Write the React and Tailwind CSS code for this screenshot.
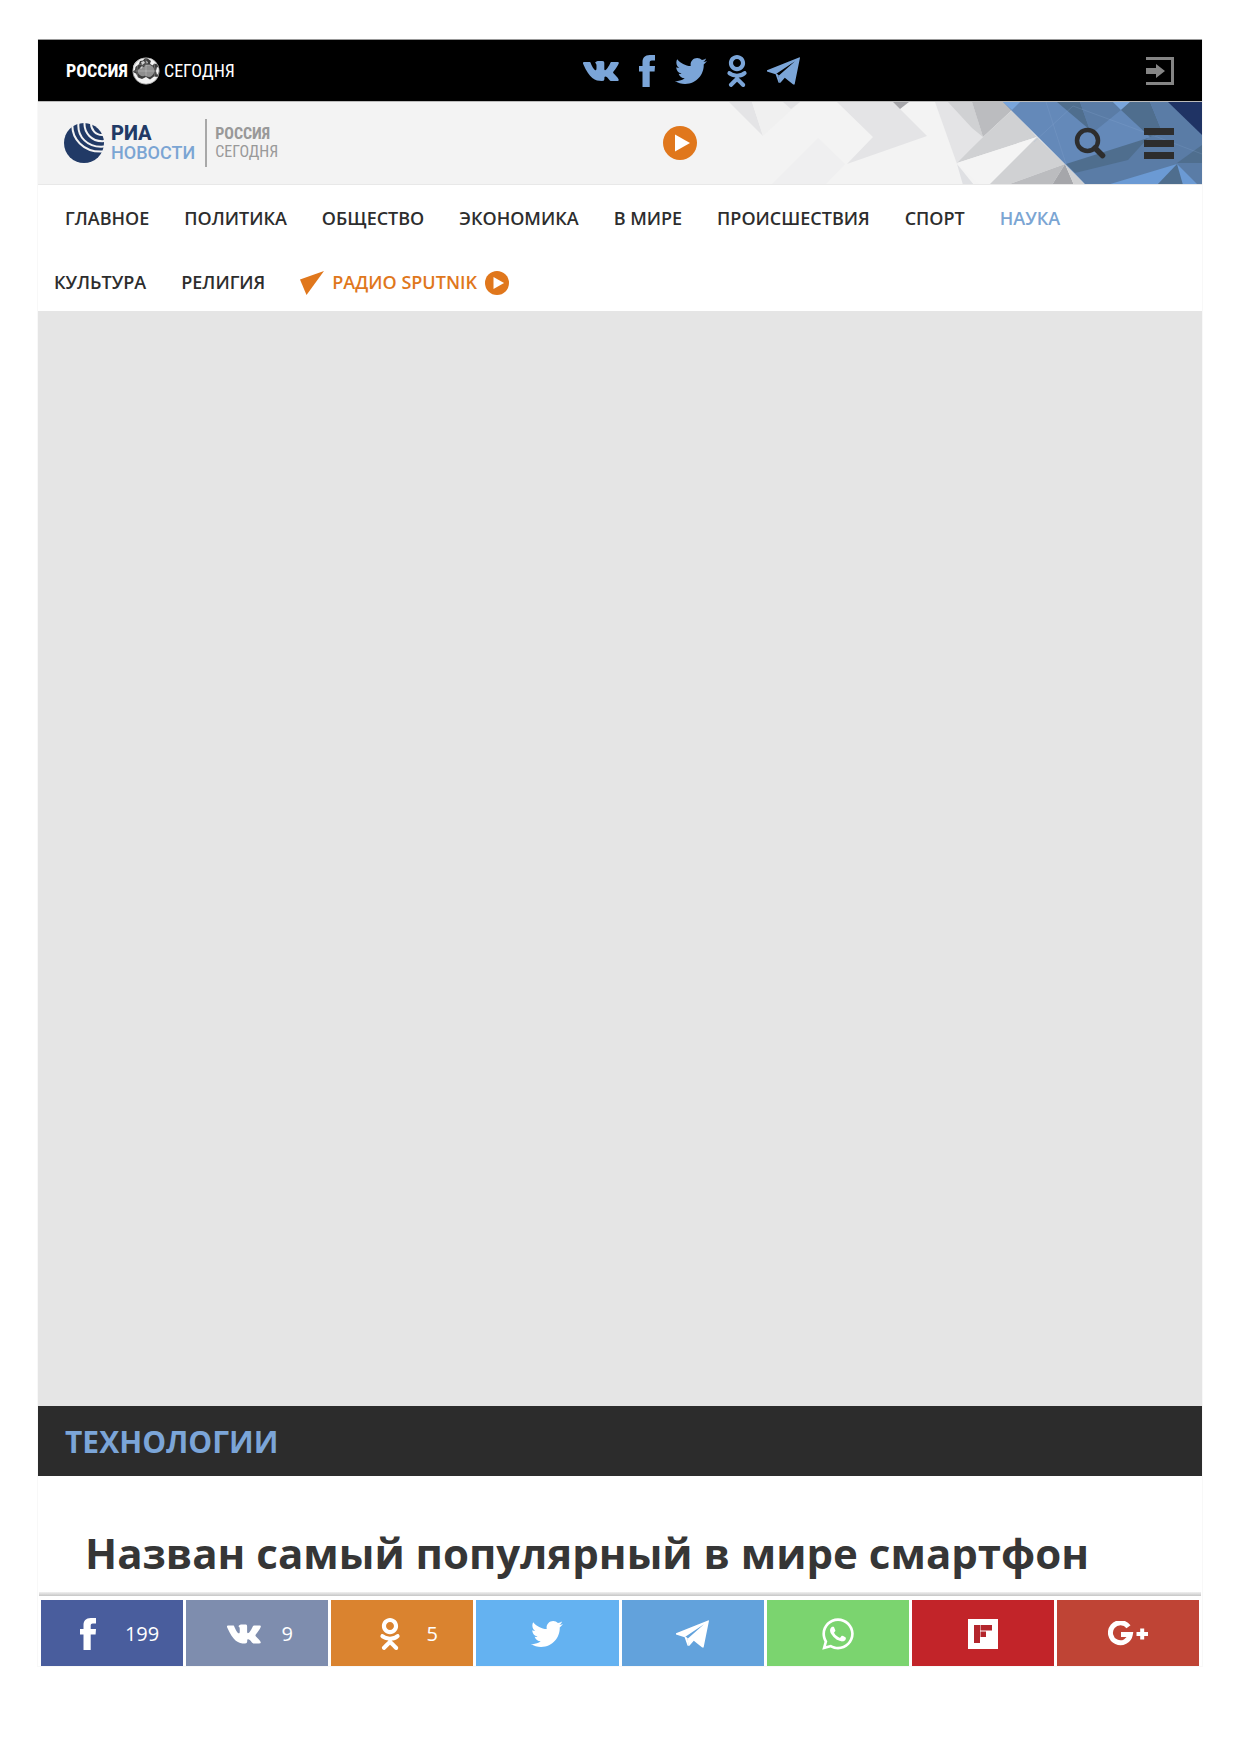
import React from "react";
import { FaTwitter, FaOdnoklassniki, FaWhatsapp } from "react-icons/fa";

function FacebookIcon({ className }) {
  return (
    <svg viewBox="0 0 16 32" className={className} fill="currentColor" aria-hidden="true">
      <path d="M16 0v5.400h-3.200c-1.500 0-2.100.8-2.100 2.200V11H16l-.4 5.400h-4.900V32H3.500V16.400H0V11h3.500V7.400C3.500 2.800 5.800 0 10.800 0z" />
    </svg>
  );
}

function VkIcon({ className }) {
  return (
    <svg viewBox="0 0 36 20" className={className} fill="currentColor" aria-hidden="true">
      <path d="M1 1h5.500c.8 0 1 .4 1.300 1.200C9.300 6 11.500 9.300 12.600 9.300c.8 0 .9-1 .9-2.500V4.400c0-1.600-.7-2.200-1.400-2.700C12.700.600 14 0 16 0h3.200c1.700 0 2.100.7 2.100 2v6c0 .8.300 1.200.8 1.200 1.300 0 3.900-4.200 5.200-7.200.3-.7.7-1 1.500-1H34.500c1.200 0 1.500.7 1.200 1.600-.8 2.200-3 5.200-5.200 8-.6.8-.5 1.200.2 2 2 2 4 4 4.800 5.600.6 1.200 0 1.800-1.300 1.800h-5.600c-1.200 0-1.700-.6-2.600-1.600-1.400-1.600-2.500-2.800-3.600-2.800-.9 0-1 .7-1 1.900 0 1.700-.3 2.500-2.400 2.500C12 20 6.500 17.500.2 3 -.3 1.800-.1 1 1 1z" />
    </svg>
  );
}

function TelegramIcon({ className }) {
  return (
    <svg viewBox="0 0 33 28" className={className} fill="currentColor" aria-hidden="true">
      <path d="M32.600.300 0 13.200v1.200l8.600 2.800L28 4.200 11.600 18.800l.9 6.900.9.100 4.400-5 8.400 6.800h1.400L33 .700z" />
      <path d="M8.600 17.200 11.600 25.800 12.800 25.800 11.600 18.800 12 18.400 9.600 16.600z" />
    </svg>
  );
}

function FlipboardIcon({ className }) {
  return (
    <svg viewBox="0 0 30 30" className={className} aria-hidden="true">
      <path fill="#fff" d="M0 0h30v30H0z" />
      <path fill="#b3262c" d="M6 6h6v18H6zM12.500 6H24v5.500H12.500zM12.500 12.500H18V18h-5.500z" />
    </svg>
  );
}

function GooglePlusIcon({ className }) {
  return (
    <svg viewBox="0 0 40 26" className={className} aria-hidden="true">
      <path d="M20.500 5.800A10 10 0 1 0 22.300 13.500H13" fill="none" stroke="#fff" strokeWidth="5" />
      <path d="M28.500 13H40M34.200 7.500v11" stroke="#fff" strokeWidth="4" />
    </svg>
  );
}

function PlayIcon({ className }) {
  return (
    <svg viewBox="0 0 34 34" className={className} aria-hidden="true">
      <circle cx="17" cy="17" r="17" fill="#e0771c" />
      <path d="M12 8.500v17L27 17z" fill="#fff" />
    </svg>
  );
}

function EarthIcon({ className }) {
  return (
    <svg viewBox="0 0 28 28" className={className} aria-hidden="true">
      <circle cx="14" cy="14" r="13.500" fill="#3c3c3c" />
      <path fill="#8f8f8f" d="M6 13c2-3 5-2 7-4s5-1 7 0 3 5 2 7-3 4-5 4-3-2-5-1-5-1-6-3z" />
      <path fill="#f2f2f2" d="M1 10C2 5 7 1 13 1l-2 2.500-3 .5-1 3-3.500 3L3 13l-2 1zM15 1c4 0 8 2 10 6l-3-.500-1.500 2-2.500-2 1-2.500zM1 15l3 1.500 2 4 4 1.500 4-2 4 2.500 4-3 4 .5c-2 4-6 7-12 7C7 27 2 22 1 15zM25 10l2 1c0 3 0 5-2 7l-1-4z" />
      <path fill="#d0d0d0" d="M9 5l3-1 1 2-3 2zM14 4l2 1-1 2zM8 11l2-2 1 1-2 2z" />
      <path fill="none" stroke="#fff" strokeOpacity="0.350" strokeWidth="0.700" d="M14 1v26M1 14h26M4 6c6 3 14 3 20 0M8 2c-4 8-4 16 0 24M20 2c4 8 4 16 0 24" />
      <circle cx="14" cy="14" r="13.200" fill="none" stroke="#aaa" strokeWidth="0.700" />
    </svg>
  );
}

function RiaGlobe({ className }) {
  return (
    <svg viewBox="0 0 40 40" className={className} aria-hidden="true">
      <circle cx="20" cy="20" r="20" fill="#213a66" />
      <g fill="none" stroke="#f3f3f3">
        <path d="M8.500 0C7 15 19 30 40 28.500" strokeWidth="2" />
        <path d="M14.500 0C13 13 23 25.500 41 23.500" strokeWidth="2" />
        <path d="M20.500 0C20 9 27 19.500 41 18" strokeWidth="2" />
        <path d="M27 0C27 6 31 13 40 12" strokeWidth="2" />
      </g>
    </svg>
  );
}

function HeaderPattern() {
  return (
    <svg
      viewBox="0 0 480 83"
      preserveAspectRatio="xMaxYMin slice"
      className="absolute inset-y-0 right-0 h-full w-[480px]"
      aria-hidden="true"
    >
      <path fill="#e4e4e6" d="M7 0H30L41 34z" />
      <path fill="#f0f0f0" d="M30 0H78L41 34z" />
      <path fill="#e2e2e4" d="M61 0H78L69 7z" />
      <path fill="#e4e4e6" d="M115 0H171L205 34 125 62 151 35z" />
      <path fill="#a6a6aa" d="M171 0H187L178 7z" />
      <path fill="#efeff0" d="M96 36 123 62 103 83H49z" />
      <path fill="#e4e4e6" d="M213 0H250L261 35 235 62z" />
      <path fill="#d0d1d3" d="M226 0H250L261 35 250 26z" />
      <path fill="#c8c9cb" d="M248 48 235 62 261 35z" fillOpacity="0.500" />
      <path fill="#dfe0e3" d="M235 62 252 83H241z" />
      <path fill="#bbbcbf" d="M250 0H281L290 8 261 35z" />
      <path fill="#d0d1d3" d="M290 8 315 35 235 61 261 35z" />
      <path fill="#f4f4f4" d="M315 35 235 61 258 83H267z" />
      <path fill="#d0d1d3" d="M315 35 343 62 285 83H267z" />
      <path fill="#bbbcbf" d="M343 62 285 83H330z" />
      <path fill="#a5a6aa" d="M343 62 330 83H352z" />
      <path fill="#d0d1d3" d="M343 62 352 83H364z" />
      <path fill="#6489b9" d="M281 0H480V83H364z" />
      <path fill="#78a5dc" d="M281 0H298L290 8z" />
      <path fill="#4f6e8e" d="M335 0H358L368 28z" />
      <path fill="#5a7ca6" d="M358 0H391L399 8 373 29H368z" />
      <path fill="#78a5dc" d="M391 0H408L399 8z" />
      <path fill="#4f6e8e" d="M408 0H428L441 32 428 35 399 8z" />
      <path fill="#5a7ca6" d="M428 0H448L480 33V83H364L353 71 428 35 441 32z" />
      <path fill="#1f3364" d="M446 0H480V33z" />
      <path fill="#4f6e8e" d="M426 36 344 62 353 71 406 58z" />
      <path fill="#4f6e8e" d="M455 61 480 43V61z" />
      <path fill="#6b9ad4" d="M455 62 385 83H476z" />
      <path fill="#4f6e8e" d="M455 62 435 83H461z" />
      <path fill="none" stroke="#8fb0d8" strokeOpacity="0.200" d="M324 0 344 62M312 40 351 4 430 33 480 52" />
    </svg>
  );
}

const narrow = "font-['Liberation_Sans_Narrow','Roboto_Condensed','Roboto',sans-serif]";

const navItems = [
  "Главное",
  "Политика",
  "Общество",
  "Экономика",
  "В мире",
  "Происшествия",
  "Спорт",
  "Наука",
  "Культура",
  "Религия",
];

const shares = [
  { label: "Facebook", color: "bg-[#495d9d]", count: "199", icon: <FacebookIcon className="h-8 w-4" /> },
  { label: "ВКонтакте", color: "bg-[#7e8dae]", count: "9", icon: <VkIcon className="h-5 w-9" /> },
  { label: "Одноклассники", color: "bg-[#da832f]", count: "5", icon: <FaOdnoklassniki className="size-8" /> },
  { label: "Twitter", color: "bg-[#64b2f1]", icon: <FaTwitter className="size-8" /> },
  { label: "Telegram", color: "bg-[#62a2dc]", icon: <TelegramIcon className="h-7 w-[33px]" /> },
  { label: "WhatsApp", color: "bg-[#7bd46f]", icon: <FaWhatsapp className="size-9" /> },
  { label: "Flipboard", color: "bg-[#c22429]", icon: <FlipboardIcon className="size-[30px]" /> },
  { label: "Google+", color: "bg-[#bf4435]", icon: <GooglePlusIcon className="h-[26px] w-10 shrink-0" /> },
];

export default function App() {
  return (
    <div className="bg-white pt-[39px] pr-9 pb-20 pl-[37px] font-['Open_Sans','Noto_Sans',sans-serif] text-[#2d2d2d]">
      <div className="border-x border-[#f8f8f8]">
        <div className="grid h-[63px] grid-cols-[1fr_auto_1fr] items-center border-y border-t-[#999] border-b-[#bbb] bg-black px-7">
          <a href="#" className={`flex items-center gap-1 text-white ${narrow} text-[18px] leading-none`}>
            <span className="font-bold">РОССИЯ</span>
            <EarthIcon className="size-7" />
            <span>СЕГОДНЯ</span>
          </a>
          <div className="ml-[142px] flex items-center gap-5 text-[#7ba5d8]">
            <a href="#" aria-label="ВКонтакте"><VkIcon className="h-5 w-9" /></a>
            <a href="#" aria-label="Facebook"><FacebookIcon className="h-8 w-4" /></a>
            <a href="#" aria-label="Twitter"><FaTwitter className="size-8" /></a>
            <a href="#" aria-label="Одноклассники" className="-mx-1.5"><FaOdnoklassniki className="size-8" /></a>
            <a href="#" aria-label="Telegram"><TelegramIcon className="h-7 w-[33px]" /></a>
          </div>
          <button type="button" aria-label="Войти" className="justify-self-end">
            <svg viewBox="0 0 28 28" className="size-7" aria-hidden="true">
              <path d="M0 1.500H26.500V26.500H0" fill="none" stroke="#858585" strokeWidth="3" />
              <path d="M0 11h10V7l9 7-9 7v-4H0z" fill="#858585" />
            </svg>
          </button>
        </div>

        <header className="relative grid h-[83px] grid-cols-[1fr_auto_1fr] items-center border-b border-[#e8e8e8] bg-[#f3f3f3] px-[26px]">
          <HeaderPattern />
          <div className="flex items-center">
            <a href="#" className="flex items-center gap-[7px]">
              <RiaGlobe className="size-10" />
              <span className="font-['Roboto',sans-serif] leading-5">
                <span className="block text-[20px] leading-5 font-extrabold text-[#213a66]">РИА</span>
                <span className="block text-[18px] leading-5 font-medium text-[#7ba5d3]">НОВОСТИ</span>
              </span>
            </a>
            <a href="#" className={`ml-2.5 flex h-12 flex-col justify-center border-l-2 border-[#a8a8a8] pl-2 ${narrow} text-[16px] leading-[18px] text-[#999]`}>
              <span className="font-bold">РОССИЯ</span>
              <span>СЕГОДНЯ</span>
            </a>
          </div>
          <button type="button" aria-label="Слушать радио" className="relative ml-[120px]">
            <PlayIcon className="size-[34px]" />
          </button>
          <div className="relative flex items-center gap-[38px] justify-self-end pr-0.5">
            <button type="button" aria-label="Поиск">
              <svg viewBox="0 0 32 32" className="size-8" fill="none" stroke="#2d2d2d" aria-hidden="true">
                <circle cx="13.500" cy="13.500" r="10.500" strokeWidth="4.500" />
                <path d="M21 21l7.500 7.500" strokeWidth="5.500" strokeLinecap="round" />
              </svg>
            </button>
            <button type="button" aria-label="Меню" className="flex w-[30px] flex-col gap-[5px]">
              <span className="h-[7px] bg-[#2d2d2d]" />
              <span className="h-[7px] bg-[#2d2d2d]" />
              <span className="h-[7px] bg-[#2d2d2d]" />
            </button>
          </div>
        </header>

        <nav className="flex flex-wrap items-center gap-y-[7px] pt-[5px] pr-8 pl-4 text-[18px] font-semibold uppercase">
          {navItems.map((item, i) => (
            <a
              key={item}
              href="#"
              className={`flex h-[57px] items-center pr-[35px] ${i === 0 ? "ml-[11px]" : ""} ${item === "Наука" ? "text-[#7ba5d3]" : ""}`}
            >
              {item}
            </a>
          ))}
          <a href="#" className="flex h-[57px] items-center gap-2 text-[#e0771c]">
            <svg viewBox="0 0 24 24" className="size-6" fill="currentColor" aria-hidden="true">
              <path d="M0 8.500 24 0 6.500 24z" />
            </svg>
            Радио Sputnik
            <PlayIcon className="size-6" />
          </a>
        </nav>

        <main>
          <div className="h-[1095px] bg-[#e5e5e5]" />
          <div className="flex h-[70px] items-center bg-[#2c2c2c] px-[27px] pt-0.5">
            <a href="#" className="text-[30px] leading-none font-bold text-[#7ba5d8]">ТЕХНОЛОГИИ</a>
          </div>
          <h1 className="px-[47px] pt-[50px] pb-3 text-[42px] leading-[54px] font-bold text-[#363636]">
            Назван самый популярный в мире смартфон
          </h1>
          <div className="mx-px h-1 bg-linear-to-b from-[#f0f0f0] to-[#c6c6c6]" />
          <div className="grid grid-cols-8 gap-[3px] border-b border-[#f8f8f8] px-[3px] pt-1 text-white">
            {shares.map((s) => (
              <button
                key={s.label}
                type="button"
                aria-label={s.count ? `${s.label}: ${s.count}` : s.label}
                className={`flex h-[66px] items-center justify-center gap-5 pt-0.5 ${s.color} ${s.count ? "pl-1.5" : ""}`}
              >
                <span className="flex w-[34px] justify-center">{s.icon}</span>
                {s.count && <span className="text-[20px]">{s.count}</span>}
              </button>
            ))}
          </div>
        </main>
      </div>
    </div>
  );
}
